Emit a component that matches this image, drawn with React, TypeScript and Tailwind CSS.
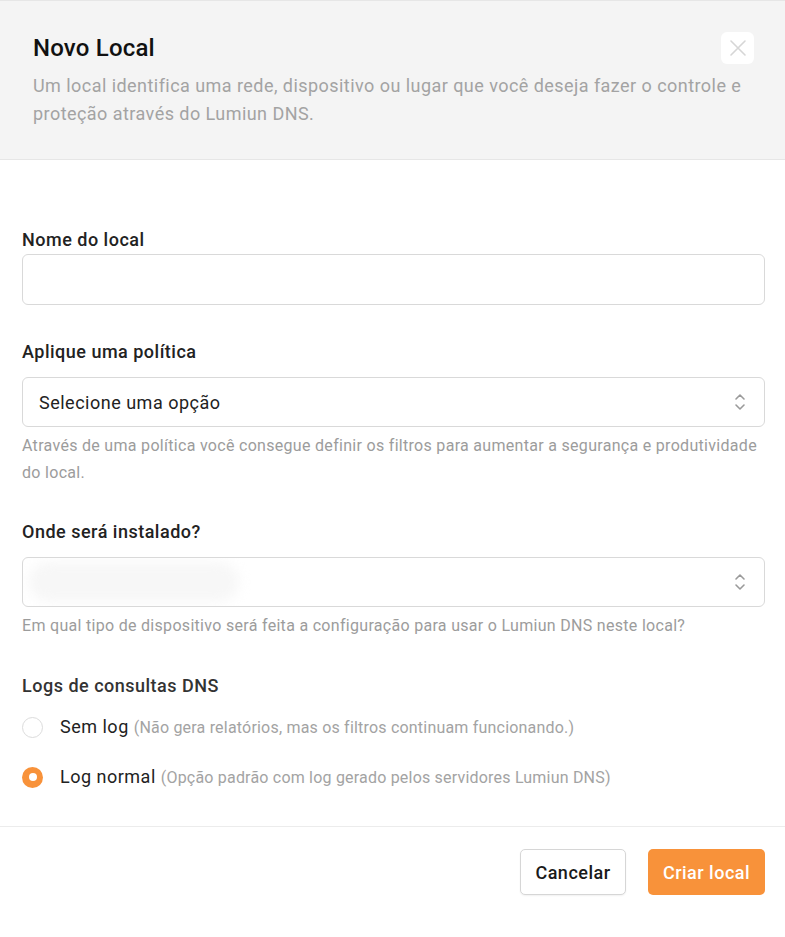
import { useState } from "react";

function ChevronUpDown() {
  return (
    <svg width="14" height="22" viewBox="0 0 14 22" fill="none" stroke="#9a9a9a" strokeWidth="1.6" strokeLinecap="round" strokeLinejoin="round">
      <path d="M3 8l4-4 4 4" />
      <path d="M3 14l4 4 4-4" />
    </svg>
  );
}

function Radio({ checked }: { checked: boolean }) {
  if (checked) {
    return (
      <span className="flex h-[21px] w-[21px] items-center justify-center rounded-full bg-[#f8923a]">
        <span className="h-[8px] w-[8px] rounded-full bg-white" />
      </span>
    );
  }
  return <span className="h-[21px] w-[21px] rounded-full border border-[#dcdcdc] bg-white" />;
}

export default function App() {
  const [log, setLog] = useState<"none" | "normal">("normal");

  return (
    <div className="min-h-[937px] w-[785px] bg-white font-['Roboto',sans-serif]">
      {/* cabeçalho */}
      <div className="border-y border-[#e6e6e6] bg-[#f4f4f4] px-[33px] pb-[31px] pt-[31px]">
        <div className="flex items-start justify-between">
          <h1 className="text-[24px] font-medium leading-[32px] tracking-[0.2px] text-[#111]">Novo Local</h1>
          <button
            type="button"
            className="mr-[-2px] flex h-[32px] w-[33px] items-center justify-center rounded-[6px] bg-white"
            aria-label="Fechar"
          >
            <svg width="18" height="18" viewBox="0 0 18 18" stroke="#d6d6d6" strokeWidth="1.6" strokeLinecap="round">
              <path d="M2 2l14 14M16 2L2 16" />
            </svg>
          </button>
        </div>
        <p className="mt-[8px] pr-[8px] text-[18px] leading-[28px] tracking-[0.45px] text-[#a3a3a3]">
          Um local identifica uma rede, dispositivo ou lugar que você deseja fazer o controle e proteção através do Lumiun DNS.
        </p>
      </div>

      {/* formulário */}
      <div className="pl-[22px] pr-[20px] pt-[68px]">
        <label className="block text-[18px] font-medium leading-[24px] tracking-[0.5px] text-[#222]">Nome do local</label>
        <input
          type="text"
          className="mt-[2px] block h-[51px] w-full rounded-[6px] border border-[#d9d9d9] px-[16px] text-[18px] outline-none"
        />

        <label className="mt-[35px] block text-[18px] font-medium leading-[24px] tracking-[0.5px] text-[#222]">Aplique uma política</label>
        <div className="mt-[13px] flex h-[50px] w-full items-center justify-between rounded-[6px] border border-[#d9d9d9] pl-[16px] pr-[17px]">
          <span className="text-[18px] tracking-[0.5px] text-[#222]">Selecione uma opção</span>
          <ChevronUpDown />
        </div>
        <p className="mt-[5px] pr-[2px] text-[16px] leading-[27px] tracking-[0.3px] text-[#9c9c9c]">
          Através de uma política você consegue definir os filtros para aumentar a segurança e produtividade do local.
        </p>

        <label className="mt-[34px] block text-[18px] font-medium leading-[24px] tracking-[0.5px] text-[#222]">Onde será instalado?</label>
        <div className="mt-[13px] flex h-[50px] w-full items-center justify-between overflow-hidden rounded-[6px] border border-[#d9d9d9] pr-[17px]">
          <span className="ml-[6px] h-[40px] w-[210px] rounded-full bg-[#f7f7f7] blur-[6px]" />
          <ChevronUpDown />
        </div>
        <p className="mt-[5px] text-[16px] leading-[27px] tracking-[0.3px] text-[#9c9c9c]">
          Em qual tipo de dispositivo será feita a configuração para usar o Lumiun DNS neste local?
        </p>

        <div className="mt-[35px] text-[18px] font-medium leading-[24px] tracking-[0.5px] text-[#333]">Logs de consultas DNS</div>
        <div className="mt-[16px] flex flex-col gap-[24px]">
          <button type="button" onClick={() => setLog("none")} className="flex items-center gap-[17px] text-left">
            <Radio checked={log === "none"} />
            <span className="text-[18px] leading-[25px] tracking-[0.5px] text-[#222]">
              Sem log <span className="text-[16px] tracking-[0.2px] text-[#a3a3a3]">(Não gera relatórios, mas os filtros continuam funcionando.)</span>
            </span>
          </button>
          <button type="button" onClick={() => setLog("normal")} className="flex items-center gap-[17px] text-left">
            <Radio checked={log === "normal"} />
            <span className="text-[18px] leading-[25px] tracking-[0.5px] text-[#222]">
              Log normal <span className="text-[16px] tracking-[0.2px] text-[#a3a3a3]">(Opção padrão com log gerado pelos servidores Lumiun DNS)</span>
            </span>
          </button>
        </div>
      </div>

      {/* rodapé */}
      <div className="mt-[36px] flex justify-end gap-[22px] border-t border-[#ececec] px-[20px] pt-[22px]">
        <button
          type="button"
          className="h-[46px] w-[106px] rounded-[5px] border border-[#d6d6d6] bg-white text-[18px] font-medium tracking-[0.5px] text-[#1a1a1a] shadow-[0_1px_2px_rgba(0,0,0,0.06)]"
        >
          Cancelar
        </button>
        <button type="button" className="h-[46px] w-[117px] rounded-[5px] bg-[#f8923a] text-[18px] font-medium tracking-[0.5px] text-white">
          Criar local
        </button>
      </div>
    </div>
  );
}
